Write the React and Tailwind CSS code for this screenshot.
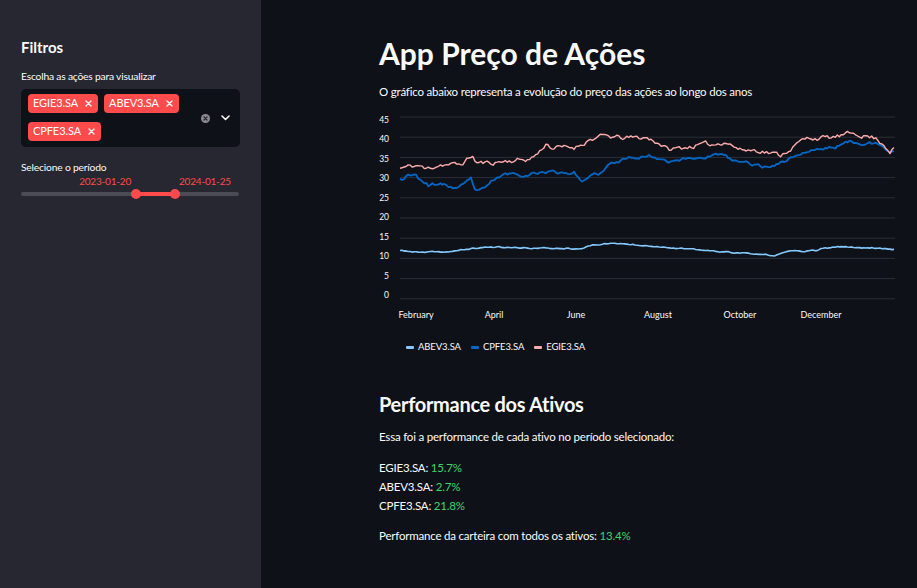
import React from "react";

function mulberry32(a) {
  return function () {
    a |= 0;
    a = (a + 0x6d2b79f5) | 0;
    let t = Math.imul(a ^ (a >>> 15), 1 | a);
    t = (t + Math.imul(t ^ (t >>> 7), 61 | t)) ^ t;
    return ((t ^ (t >>> 14)) >>> 0) / 4294967296;
  };
}

const N = 245;
const X0 = 400;
const X1 = 894;

function makeSeries(keys, seed, amp) {
  const rng = mulberry32(seed);
  let n = 0;
  const pts = [];
  for (let i = 0; i < N; i++) {
    const x = X0 + (i * (X1 - X0)) / (N - 1);
    let k = 0;
    while (k < keys.length - 2 && keys[k + 1][0] < x) k++;
    const [xa, va] = keys[k];
    const [xb, vb] = keys[k + 1];
    const t = Math.min(1, Math.max(0, (x - xa) / (xb - xa)));
    const base = va + (vb - va) * t;
    n = n * 0.6 + (rng() - 0.5) * amp;
    const v = base + n;
    const gx = x - 379;
    const gy = 189 - v * 4.044;
    pts.push(`${gx.toFixed(1)},${gy.toFixed(1)}`);
  }
  return pts.join(" ");
}

const pinkKeys = [
  [400, 32.3], [410, 32.8], [420, 33], [425, 32], [440, 33.3], [460, 33.2],
  [468, 34.6], [472, 35.6], [476, 33.7], [490, 33.6], [500, 34], [515, 34.3],
  [530, 34.6], [540, 36.5], [546, 38.5], [552, 37.4], [575, 37.5], [590, 39.5],
  [605, 40.3], [620, 39.8], [646, 39.9], [660, 38.5], [668, 36.9], [685, 37.5],
  [700, 38.1], [715, 38.2], [725, 39.1], [740, 36.9], [760, 36.8], [780, 35.5],
  [792, 37.5], [800, 38.9], [810, 39.9], [830, 39.8], [855, 41], [875, 39.8],
  [883, 38.5], [890, 36.6], [894, 37.4],
];

const blueKeys = [
  [400, 30], [404, 29.8], [407, 31.1], [415, 30.6], [420, 29.5], [426, 28.8],
  [428, 27.5], [432, 28.4], [445, 28.2], [455, 27.4], [465, 28.3], [471, 29.6],
  [474, 27], [485, 27.1], [492, 29.2], [500, 30.3], [510, 31.1], [525, 30.7],
  [545, 31.5], [560, 31.3], [575, 31.2], [580, 29.4], [584, 29.2], [595, 30.7],
  [602, 31.2], [610, 33.4], [620, 33.9], [626, 35], [650, 35.4], [668, 34.2],
  [685, 34.6], [700, 35], [720, 35.8], [735, 34], [750, 33.6], [763, 32.6],
  [780, 33.6], [795, 35.5], [815, 36.9], [835, 37.6], [850, 38.9], [870, 38.5],
  [880, 38], [886, 36.5], [894, 36.4],
];

const lightKeys = [
  [400, 12], [420, 11.5], [450, 11.7], [470, 12.4], [490, 12.9], [520, 12.6],
  [580, 12.5], [595, 13.4], [610, 13.8], [645, 13.3], [680, 12.5], [720, 11.7],
  [760, 11], [775, 10.7], [790, 11.9], [818, 11.9], [822, 12.5], [840, 12.9],
  [880, 12.6], [894, 12.3],
];

const pinkPts = makeSeries(pinkKeys, 11, 1.0);
const bluePts = makeSeries(blueKeys, 23, 0.7);
const lightPts = makeSeries(lightKeys, 37, 0.25);

function Chart() {
  const grid = [];
  for (let i = 0; i < 10; i++) grid.push(7 + i * 20.2);
  const labels = [45, 40, 35, 30, 25, 20, 15, 10, 5, 0];
  const months = [
    ["February", 37],
    ["April", 115],
    ["June", 197],
    ["August", 279],
    ["October", 361],
    ["December", 442],
  ];
  return (
    <svg width="521" height="215" viewBox="0 0 521 215" className="block">
      {grid.map((y, i) => (
        <line key={i} x1="21" x2="516" y1={y} y2={y} stroke="#2d2f38" strokeWidth="1" />
      ))}
      {labels.map((l, i) => (
        <text
          key={l}
          x="10"
          y={10 + i * 19.45 + 3}
          textAnchor="end"
          fontSize="8.5"
          fill="#fafafa"
          fontFamily="Lato, 'Open Sans', sans-serif"
        >
          {l}
        </text>
      ))}
      {months.map(([m, x]) => (
        <text
          key={m}
          x={x}
          y="208"
          textAnchor="middle"
          fontSize="9"
          fill="#fafafa"
          fontFamily="Lato, 'Open Sans', sans-serif"
        >
          {m}
        </text>
      ))}
      <polyline points={lightPts} fill="none" stroke="#83c9ff" strokeWidth="1.6" strokeLinejoin="round" />
      <polyline points={bluePts} fill="none" stroke="#0068c9" strokeWidth="1.8" strokeLinejoin="round" />
      <polyline points={pinkPts} fill="none" stroke="#ffabab" strokeWidth="1.4" strokeLinejoin="round" />
    </svg>
  );
}

function Tag({ label }) {
  return (
    <div className="flex h-[19px] items-center gap-[7px] rounded-[4px] bg-[#ff4b4b] pl-[5px] pr-[6px] text-[11px] tracking-[-0.1px] text-white">
      <span>{label}</span>
      <svg width="7" height="7" viewBox="0 0 7 7">
        <path d="M1 1 L6 6 M6 1 L1 6" stroke="white" strokeWidth="1.3" strokeLinecap="round" />
      </svg>
    </div>
  );
}

function LegendItem({ color, label }) {
  return (
    <div className="flex items-center gap-[4px]">
      <span className="block h-[3px] w-[8px] rounded-[1px]" style={{ backgroundColor: color }} />
      <span>{label}</span>
    </div>
  );
}

export default function App() {
  return (
    <div
      className="flex h-[588px] w-[917px] overflow-hidden bg-[#0e1117] text-[#fafafa]"
      style={{ fontFamily: "Lato, 'Open Sans', sans-serif" }}
    >
      <aside className="flex w-[261px] shrink-0 flex-col bg-[#262730] px-[21px] pt-[37px]">
        <h2 className="text-[15px] font-bold leading-[20px]">Filtros</h2>
        <div className="mt-[12px] text-[10.3px] leading-[14px] tracking-[-0.2px]">
          Escolha as ações para visualizar
        </div>
        <div className="mt-[6px] flex h-[58px] items-center rounded-[5px] bg-[#0e1117] pl-[7px] pr-[10px]">
          <div className="flex w-[160px] flex-wrap gap-x-[6px] gap-y-[9px] self-start pt-[5px]">
            <Tag label="EGIE3.SA" />
            <Tag label="ABEV3.SA" />
            <Tag label="CPFE3.SA" />
          </div>
          <div className="ml-auto flex items-center gap-[11px]">
            <svg width="9" height="9" viewBox="0 0 9 9">
              <circle cx="4.5" cy="4.5" r="4.5" fill="#8a8b91" />
              <path d="M3 3 L6 6 M6 3 L3 6" stroke="#262730" strokeWidth="1.2" strokeLinecap="round" />
            </svg>
            <svg width="9" height="6" viewBox="0 0 9 6">
              <path d="M1 1 L4.5 4.5 L8 1" stroke="#fafafa" strokeWidth="1.6" fill="none" strokeLinecap="round" strokeLinejoin="round" />
            </svg>
          </div>
        </div>
        <div className="mt-[13px] text-[10.3px] leading-[14px] tracking-[-0.2px]">Selecione o período</div>
        <div className="relative mt-[0px] h-[24px] w-[218px]">
          <div className="flex h-[14px] text-[10px] leading-[14px] tracking-[-0.2px] text-[#ff4b4b]">
            <span className="w-[110px] text-right">2023-01-20</span>
            <span className="ml-[48px]">2024-01-25</span>
          </div>
          <div className="mt-[4px] h-[4px] w-full rounded-full bg-[#4a4b54]" />
          <div className="absolute left-[115px] top-[18px] h-[4px] w-[39px] bg-[#ff4b4b]" />
          <div className="absolute left-[110px] top-[15px] h-[10px] w-[10px] rounded-full bg-[#ff4b4b]" />
          <div className="absolute left-[149px] top-[15px] h-[10px] w-[10px] rounded-full bg-[#ff4b4b]" />
        </div>
      </aside>
      <main className="flex flex-1 flex-col pl-[118px] pt-[35px]">
        <h1 className="text-[30px] font-bold leading-[36px]">App Preço de Ações</h1>
        <p className="mt-[12px] text-[11.5px] leading-[18px] tracking-[-0.2px]">
          O gráfico abaixo representa a evolução do preço das ações ao longo dos anos
        </p>
        <div className="mt-[9px]">
          <Chart />
        </div>
        <div className="mt-[16px] flex gap-[10px] pl-[27px] text-[9.5px] leading-[12px] tracking-[-0.1px]">
          <LegendItem color="#83c9ff" label="ABEV3.SA" />
          <LegendItem color="#0068c9" label="CPFE3.SA" />
          <LegendItem color="#ffabab" label="EGIE3.SA" />
        </div>
        <h2 className="mt-[38px] text-[20px] font-bold leading-[26px] tracking-[-0.3px]">
          Performance dos Ativos
        </h2>
        <p className="mt-[11px] text-[11.5px] leading-[18px] tracking-[-0.2px]">
          Essa foi a performance de cada ativo no período selecionado:
        </p>
        <div className="mt-[12px] flex flex-col text-[11.5px] leading-[19px] tracking-[-0.2px]">
          <div>
            EGIE3.SA: <span className="text-[#3dd56d]">15.7%</span>
          </div>
          <div>
            ABEV3.SA: <span className="text-[#3dd56d]">2.7%</span>
          </div>
          <div>
            CPFE3.SA: <span className="text-[#3dd56d]">21.8%</span>
          </div>
        </div>
        <p className="mt-[12px] text-[11.5px] leading-[18px] tracking-[-0.2px]">
          Performance da carteira com todos os ativos: <span className="text-[#3dd56d]">13.4%</span>
        </p>
      </main>
    </div>
  );
}
